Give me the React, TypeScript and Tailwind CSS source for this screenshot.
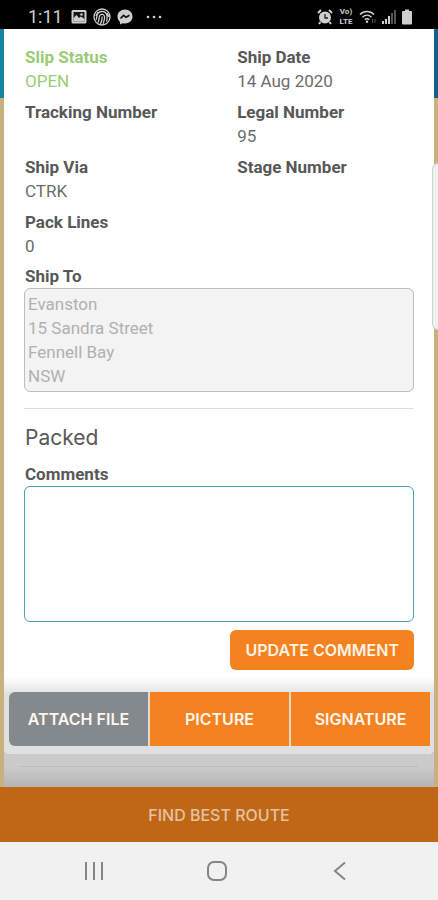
import React from "react";

const roboto = "font-[Roboto,'Liberation_Sans',sans-serif]";
const display = "font-[Inter,'Open_Sans',sans-serif]";

function StatusBar() {
  return (
    <header className="flex h-[29px] items-center justify-between bg-black pt-1 pr-[25px] pl-7 text-[#cfcfcf]">
      <div className="flex items-center gap-1.5">
        <span className="w-[37px] text-lg leading-6">1:11</span>
        <svg aria-label="Picture" width="16" height="16" viewBox="0 0 16 16">
          <rect x="0.5" y="1" width="15" height="13.5" rx="1.5" fill="currentColor" />
          <path d="M2.5 3h11v9.5h-11z" fill="#161616" />
          <path d="M2.5 12.5V9l3-3 2.500 3 2-1.500 3.500 2.500v2.500z" fill="currentColor" />
          <circle cx="10.500" cy="5.500" r="1.200" fill="currentColor" />
        </svg>
        <svg aria-label="Fingerprint" width="18" height="18" viewBox="0 0 18 18" fill="none" stroke="currentColor" strokeWidth="1.300">
          <circle cx="9" cy="9" r="8" />
          <path d="M3 12c1-2 .5-4 1.500-6C6 3.200 10 2.600 12.300 4.600c2.700 2.400 2 6 1.200 9M5 14.500c1.600-3 .6-5.500 2-7.300 1.300-1.600 4-1 4.500 1.300.5 2.500-.5 5-1.300 7.300M7.500 16c1.300-2.500 1.700-4.500 1.700-7.500M3 8l2-4M14 5l2 4" />
        </svg>
        <svg aria-label="Messenger" width="16" height="16" viewBox="0 0 16 16">
          <path d="M8 .5C3.700.5.500 3.500.500 7.600c0 2.100.9 4 2.500 5.300v2.600l2.400-1.300c.8.3 1.700.4 2.600.4 4.300 0 7.500-3 7.500-7S12.300.5 8 .5z" fill="currentColor" />
          <path d="M3.500 9.500l3-3.200 2.500 1.900 3.500-2" fill="none" stroke="#111" strokeWidth="1.700" />
        </svg>
        <svg className="ml-1.5" aria-label="More notifications" width="18" height="4" viewBox="0 0 18 4" fill="currentColor">
          <circle cx="3" cy="2" r="1.300" />
          <circle cx="9" cy="2" r="1.300" />
          <circle cx="15" cy="2" r="1.300" />
        </svg>
      </div>
      <div className="flex items-center gap-[5px]">
        <svg aria-label="Alarm" width="16" height="16" viewBox="0 0 16 16">
          <circle cx="8" cy="8.500" r="6" fill="currentColor" />
          <path d="M1 4l3-3M15 4l-3-3M3.500 13l-1.500 2M12.500 13l1.500 2" stroke="currentColor" strokeWidth="2" />
          <path d="M8 5v4h3" fill="none" stroke="#222" strokeWidth="1.300" />
        </svg>
        <span className="flex w-4 flex-col items-center text-[8px] leading-[10px] font-bold">
          <span>Vo)</span>
          <span>LTE</span>
        </span>
        <svg aria-label="Wi-Fi" width="18" height="16" viewBox="0 0 18 16" fill="none" stroke="currentColor" strokeWidth="1.500">
          <path d="M1 5.500c4-4 10-4 14 0M3.500 8.200c2.700-2.600 6.300-2.600 9 0M5.800 10.800c1.500-1.300 3-1.300 4.500 0" />
          <circle cx="8" cy="12.800" r="1.200" fill="currentColor" stroke="none" />
          <path d="M13.500 10v4M16 10v4" strokeWidth="1" opacity=".4" />
        </svg>
        <svg aria-label="Signal" width="14" height="14" viewBox="0 0 14 14" fill="currentColor">
          <path d="M0 11h2v3H0zM3 9h2v5H3zM6 6h2v8H6z" />
          <path d="M9 3h2v11H9zM12 0h2v14h-2z" opacity=".4" />
        </svg>
        <svg aria-label="Battery" width="12" height="16" viewBox="0 0 12 16" fill="currentColor">
          <path d="M4 .5h4V2h2a1 1 0 0 1 1 1v11.500a1 1 0 0 1-1 1H2a1 1 0 0 1-1-1V3a1 1 0 0 1 1-1h2z" />
        </svg>
      </div>
    </header>
  );
}

function Field({ label, value, accent }: { label: string; value?: string; accent?: boolean }) {
  return (
    <div className={accent ? "text-[#9bcb74]" : "text-[#6c6c6c]"}>
      <dt className={accent ? "font-bold" : "font-bold text-[#585858]"}>{label}</dt>
      <dd className="min-h-6">{value}</dd>
    </div>
  );
}

export default function App() {
  return (
    <div className={`${roboto} relative flex min-h-screen flex-col overflow-hidden text-[17px] leading-6`}>
      <StatusBar />
      <div className="flex grow flex-col bg-[linear-gradient(transparent_69px,#c8b27c_69px),linear-gradient(90deg,#1783a2_50%,#14608a_50%)] px-1">
        <div className="flex grow flex-col bg-[linear-gradient(#cbcbcb_calc(100%-20px),#b4b4b4)]">
          <main className="rounded-b-md bg-white">
            <div className="px-5 pt-4 text-[#585858]">
              <dl className="grid grid-cols-[6fr_5fr] gap-y-[7px] pl-px">
                <Field label="Slip Status" value="OPEN" accent />
                <Field label="Ship Date" value="14 Aug 2020" />
                <Field label="Tracking Number" />
                <Field label="Legal Number" value="95" />
                <Field label="Ship Via" value="CTRK" />
                <Field label="Stage Number" />
                <Field label="Pack Lines" value="0" />
              </dl>
              <label htmlFor="ship-to" className="mt-1.5 block pl-px font-bold">
                Ship To
              </label>
              <textarea
                id="ship-to"
                disabled
                rows={4}
                className="block h-[104px] w-full resize-none rounded-md border border-[#bdbdbd] bg-[#f3f3f3] px-[3px] py-[3px] text-[#b0b0b0]"
                defaultValue={"Evanston\n15 Sandra Street\nFennell Bay\nNSW"}
              />
              <hr className="mt-4 border-[#dedede]" />
              <h2 className={`${display} mt-4 pl-px text-[21px] leading-[25px]`}>Packed</h2>
              <label htmlFor="comments" className="mt-3 block pl-px font-bold">
                Comments
              </label>
              <textarea
                id="comments"
                className="block h-[136px] w-full resize-none rounded-md border border-[#45a3b5] bg-white p-1 outline-none"
              />
              <div className="flex justify-end pt-2">
                <button className={`${display} h-10 rounded-md bg-[#f58220] px-[15px] text-base font-semibold text-[#fff3e4]`}>
                  UPDATE COMMENT
                </button>
              </div>
            </div>
            <div className="h-[22px] bg-[linear-gradient(#fff,#fff_30%,#e6e6e6)]" />
            <div className={`${display} rounded-b-md bg-[#e0e0e0] pr-1 pb-2 pl-[5px] text-base font-semibold text-[#fff6ec]`}>
              <div className="grid grid-cols-3 gap-[2px] rounded-l-md bg-[#e6dcc6]">
                <button className="h-[54px] rounded-l-md bg-[#84898d]">ATTACH FILE</button>
                <button className="h-[54px] bg-[#f58220]">PICTURE</button>
                <button className="h-[54px] bg-[#f58220]">SIGNATURE</button>
              </div>
            </div>
          </main>
          <hr className="mx-4 mt-3 border-[#bcbcbc]" />
        </div>
      </div>
      <button className={`${display} h-[55px] bg-[#c06716] text-base font-medium text-[#e3c3a4]`}>
        FIND BEST ROUTE
      </button>
      <nav className="grid h-[58px] grid-cols-[33px_1fr_1fr_1fr_37px] items-center bg-[#f1f1f1] text-[#858585]">
        <button aria-label="Recent apps" className="col-start-2 flex justify-center">
          <svg width="20" height="20" viewBox="0 0 20 20" fill="none" stroke="currentColor" strokeWidth="2">
            <path d="M2 1v18M10 1v18M18 1v18" />
          </svg>
        </button>
        <button aria-label="Home" className="flex justify-center">
          <svg width="20" height="20" viewBox="0 0 20 20" fill="none" stroke="currentColor" strokeWidth="2">
            <rect x="1" y="1" width="18" height="18" rx="6" />
          </svg>
        </button>
        <button aria-label="Back" className="flex justify-center">
          <svg width="20" height="20" viewBox="0 0 20 20" fill="none" stroke="currentColor" strokeWidth="2">
            <path d="M15 1.500L5 10l10 8.500" />
          </svg>
        </button>
      </nav>
      <div className="absolute top-[163px] right-0 h-[167px] w-[6px] rounded-l-md border border-r-0 border-[#d2d2cf] bg-[#f0f1ec]" />
    </div>
  );
}
